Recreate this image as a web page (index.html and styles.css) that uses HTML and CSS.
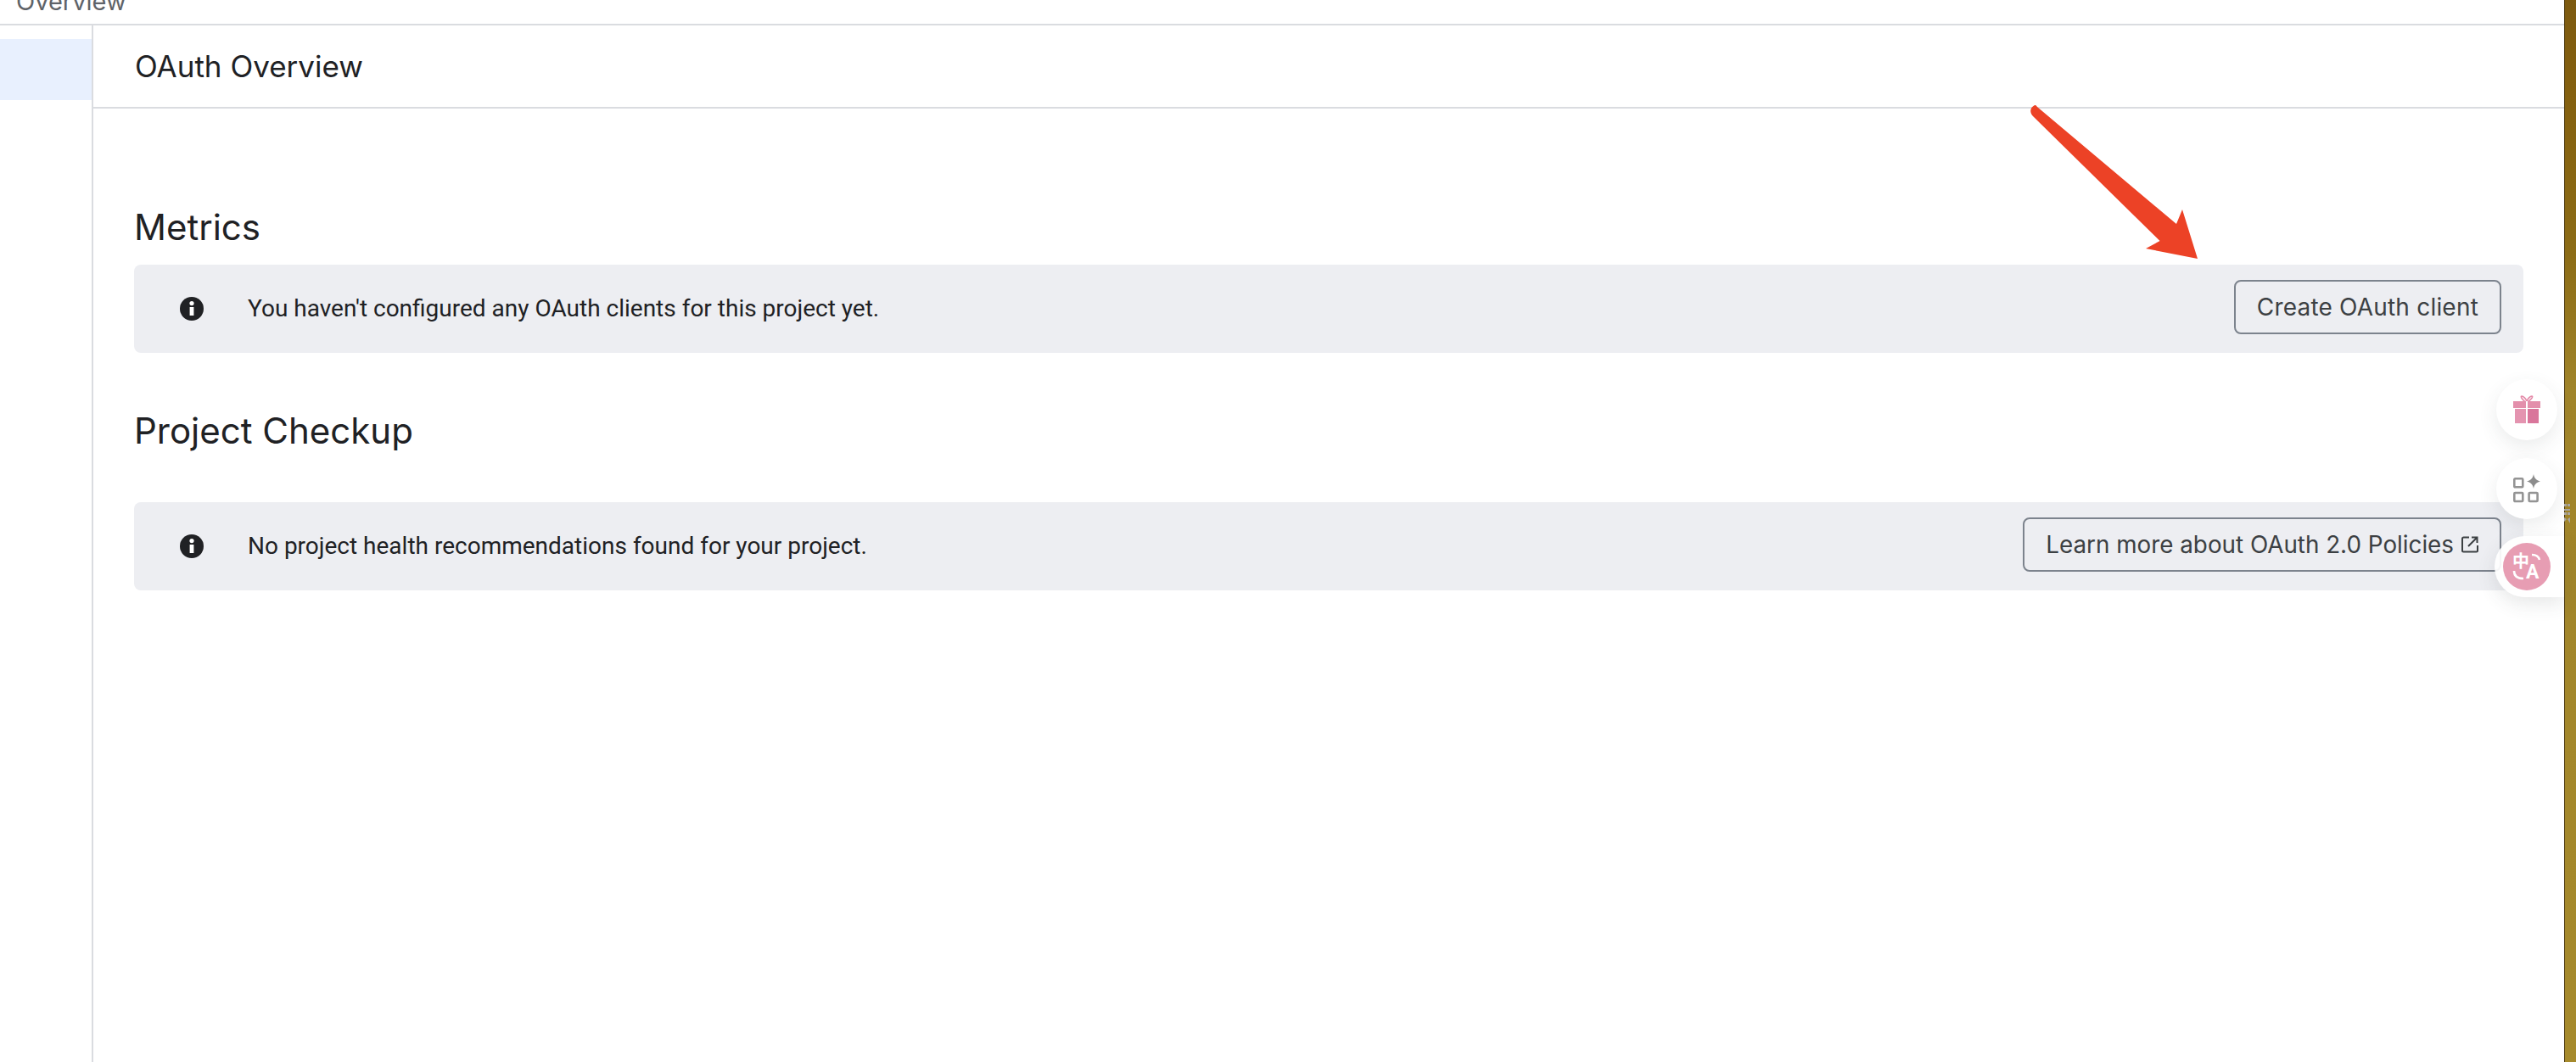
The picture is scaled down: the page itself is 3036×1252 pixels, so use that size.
FILE: index.html
```html
<!DOCTYPE html>
<html lang="en">
<head>
<meta charset="utf-8">
<title>OAuth Overview</title>
<link rel="stylesheet" href="styles.css">
</head>
<body>
<div class="app">
  <div class="page">
    <div class="topbar"><span class="crumb">Overview</span></div>
    <div class="workspace">
      <nav class="sidebar"><div class="nav-active"></div></nav>
      <main class="content">
        <header class="content-header"><h1 class="page-title">OAuth Overview</h1></header>
        <section class="section section-metrics">
          <h2 class="section-title">Metrics</h2>
          <div class="banner">
            <svg class="info-icon" viewBox="0 0 28 28"><circle cx="14" cy="14" r="14" fill="#202124"/><rect x="11.6" y="12" width="4.8" height="10" fill="#fff"/><circle cx="14" cy="7.6" r="2.6" fill="#fff"/></svg>
            <p class="banner-text">You haven't configured any OAuth clients for this project yet.</p>
            <button class="btn btn-create">Create OAuth client</button>
          </div>
        </section>
        <section class="section section-checkup">
          <h2 class="section-title">Project Checkup</h2>
          <div class="banner">
            <svg class="info-icon" viewBox="0 0 28 28"><circle cx="14" cy="14" r="14" fill="#202124"/><rect x="11.6" y="12" width="4.8" height="10" fill="#fff"/><circle cx="14" cy="7.6" r="2.6" fill="#fff"/></svg>
            <p class="banner-text">No project health recommendations found for your project.</p>
            <button class="btn btn-link">Learn more about OAuth 2.0 Policies
              <svg class="ext-icon" viewBox="0 0 20 20" fill="none" stroke="#3c4043" stroke-width="2"><path d="M9 1.500H2.500a1.500 1.500 0 0 0-1.500 1.500v14a1.500 1.500 0 0 0 1.500 1.500h15a1.500 1.500 0 0 0 1.500-1.500V11"/><path d="M12 1.500h6.500V8M18.500 1.500 8 12"/></svg>
            </button>
          </div>
        </section>
      </main>
    </div>
  </div>
  <div class="desktop-strip">
    <svg class="strip-mark" viewBox="0 0 7 23"><path d="M0 0h3v3H0zM4 0h3v3H4zM0 6h7v2H0zM0 10h3v3H0zM4 10h3v3H4zM0 16l3 2-3 3zM7 16l-3 2 3 5z" fill="#a9a7a2"/></svg>
  </div>
</div>

<svg class="arrow" viewBox="0 0 200 184"><path d="M8 2 C9.500 1.500 10.500 3 11 4 L175 142 L182 125 L200 183 L139 171 L155.500 162 L6 15 C2 11 2 5 8 2Z" fill="#ec4226"/></svg>

<div class="fab fab-gift">
  <svg viewBox="0 0 32 36" class="fab-icon-gift">
    <path d="M15 9C11 7 8 2 10 2s5 3 6 6c1-3 4-6 6-6s-1 5-6 7z" fill="none" stroke="#e48aa8" stroke-width="1.6"/>
    <rect x="0" y="8" width="32" height="8" fill="#e38fab"/>
    <rect x="2" y="17" width="28" height="17" fill="#e494b0"/>
    <rect x="17" y="17" width="13" height="17" fill="#d9769b"/>
    <rect x="15" y="8" width="2" height="26" fill="#fff"/>
  </svg>
</div>
<div class="fab fab-apps">
  <svg viewBox="0 0 32 34" class="fab-icon-apps" fill="none" stroke="#949494" stroke-width="2.6">
    <rect x="1.300" y="5.300" width="10" height="10" rx="1"/>
    <rect x="1.300" y="22" width="10" height="10" rx="1"/>
    <rect x="18.600" y="22" width="10" height="10" rx="1"/>
    <path d="M24 0c1 5 3 7 8 8.500-5 1.500-7 3.500-8 8.500-1-5-3-7-8-8.500 5-1.500 7-3.500 8-8.500z" fill="#8c8c8c" stroke="none"/>
  </svg>
</div>
<div class="fab-pill">
  <div class="translate-badge">
    <span class="tr-zh">中</span><span class="tr-en">A</span>
    <svg class="tr-arcs" viewBox="0 0 56 56" fill="none" stroke="#fff" stroke-width="2.6"><path d="M34 14c5 0 8 2 9 6"/><path d="M13 33c0 6 4 9 11 9"/></svg>
  </div>
</div>
</body>
</html>
```

FILE: styles.css
```css
* { box-sizing: border-box; }
html, body { margin: 0; padding: 0; height: 1252px; overflow: hidden; background: #fff; }
body { font-family: Roboto, "Liberation Sans", sans-serif; color: #202124; position: relative; }

.app { display: flex; width: 3036px; height: 1252px; }
.page { flex: 1; display: flex; flex-direction: column; min-width: 0; }

.topbar { height: 30px; border-bottom: 2px solid #dadce0; overflow: hidden; padding-left: 19px; display: flex; align-items: flex-end; }
.crumb { font-family: Inter, sans-serif; font-size: 29px; line-height: 32px; color: #5f6368; margin-bottom: 10px; }

.workspace { flex: 1; display: flex; min-height: 0; }
.sidebar { width: 110px; border-right: 2px solid #dadce0; padding-top: 16px; }
.nav-active { height: 72px; background: #e8f0fe; }

.content { flex: 1; min-width: 0; }
.content-header { height: 98px; border-bottom: 2px solid #dadce0; padding-left: 49px; display: flex; align-items: center; }
.page-title { margin: 0; font-family: Inter, sans-serif; font-size: 35px; font-weight: 400; line-height: 44px; color: #202124; }

.section { padding: 0 48px 0 48px; }
.section-metrics { padding-top: 114px; }
.section-checkup { padding-top: 66px; }
.section-title { margin: 0; font-family: Inter, sans-serif; font-size: 42px; font-weight: 400; line-height: 52px; color: #202124; }
.section-metrics .section-title { height: 70px; }
.section-checkup .section-title { height: 110px; }

.banner { height: 104px; background: #edeef2; border-radius: 8px; display: flex; align-items: flex-start; padding: 0 26px 0 54px; }
.info-icon { width: 28px; height: 28px; flex: none; margin-top: 38px; }
.banner-text { margin: 0; flex: 1; padding-left: 52px; font-size: 28px; line-height: 36px; margin-top: 34px; color: #202124; }
.btn { flex: none; margin-top: 18px; height: 64px; padding: 0 25px; border: 2px solid #7c838d; border-radius: 8px; background: transparent; font-family: Inter, sans-serif; font-size: 28px; color: #3c4043; display: flex; align-items: center; white-space: nowrap; }
.btn-create { letter-spacing: .2px; }
.btn-link { font-size: 27.800px; }
.ext-icon { width: 20px; height: 20px; margin-left: 9px; flex: none; }

.desktop-strip { width: 14px; flex: none; position: relative; border-left: 1px solid #4d3a10; background: linear-gradient(180deg, #7d5a10 0, #84600f 110px, #8c6c16 300px, #a0842a 460px, #a68a2c 100%); }
.strip-mark { position: absolute; left: -1px; top: 594px; width: 7px; height: 23px; }

.arrow { position: absolute; left: 2390px; top: 122px; width: 200px; height: 184px; }

.fab { position: absolute; left: 2942px; width: 72px; height: 72px; border-radius: 50%; background: #fff; box-shadow: 0 8px 22px rgba(60, 64, 67, .1); display: flex; align-items: center; justify-content: center; }
.fab-gift { top: 447px; }
.fab-apps { top: 540px; }
.fab-icon-gift { width: 32px; height: 36px; }
.fab-icon-apps { width: 32px; height: 34px; }

.fab-pill { position: absolute; left: 2940px; top: 632px; width: 82px; height: 72px; border-radius: 36px 0 0 36px; background: rgba(255, 255, 255, .92); box-shadow: 0 8px 22px rgba(60, 64, 67, .12); display: flex; align-items: center; padding-left: 10px; }
.translate-badge { width: 56px; height: 56px; border-radius: 50%; background: #e79db3; color: #fff; position: relative; }
.tr-zh { position: absolute; left: 11px; top: 10px; font: 700 20px/22px "Noto Sans CJK SC", sans-serif; }
.tr-en { position: absolute; left: 27px; top: 23px; font: 700 23px/24px Roboto, sans-serif; }
.tr-arcs { position: absolute; left: 0; top: 0; width: 56px; height: 56px; }
```
